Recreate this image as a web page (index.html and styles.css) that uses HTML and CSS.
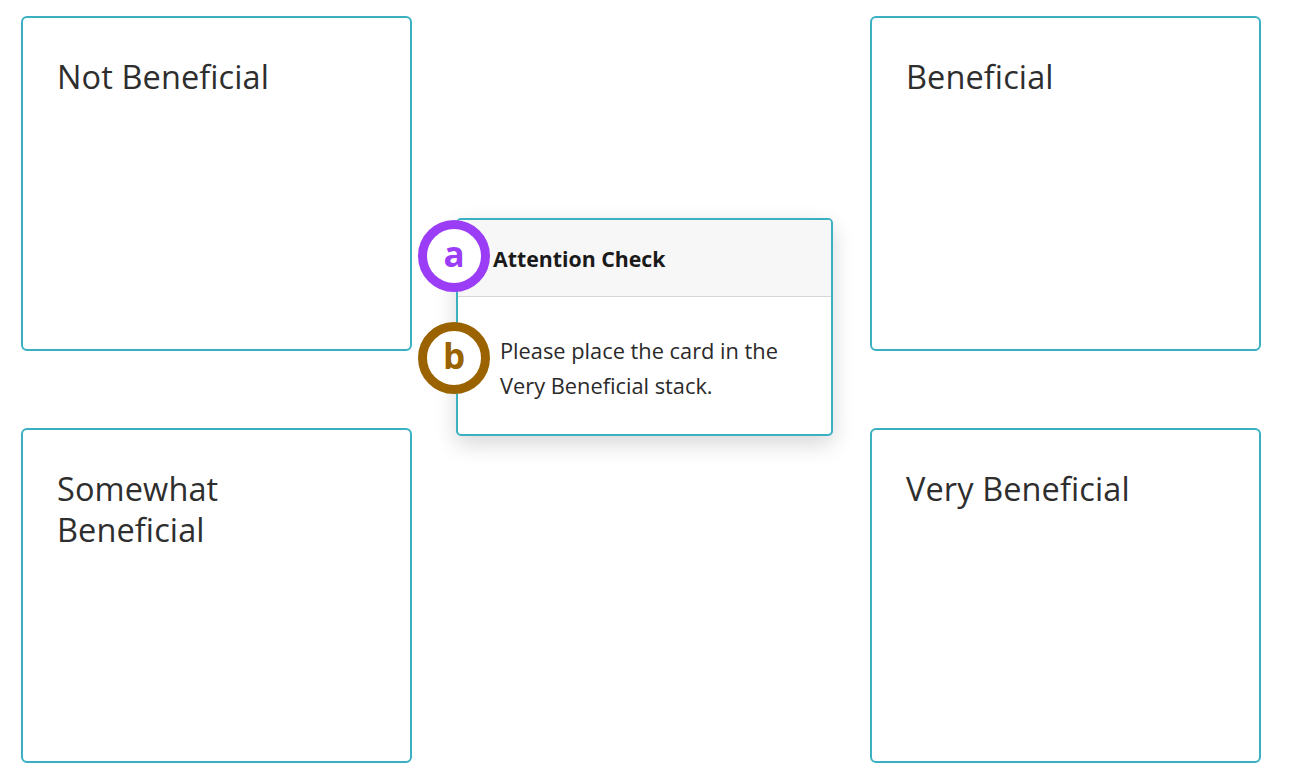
FILE: index.html
```html
<!DOCTYPE html>
<html>
<head>
<meta charset="utf-8">
<link rel="stylesheet" href="styles.css">
</head>
<body>
<div class="board">
  <div class="stack"><div class="stack-title">Not Beneficial</div></div>
  <div class="stack"><div class="stack-title">Beneficial</div></div>
  <div class="stack"><div class="stack-title narrow">Somewhat Beneficial</div></div>
  <div class="stack"><div class="stack-title">Very Beneficial</div></div>

  <div class="card">
    <div class="card-header">Attention Check</div>
    <div class="card-body">Please place the card in the<br>Very Beneficial stack.</div>
  </div>
  <div class="badge badge-a">a</div>
  <div class="badge badge-b">b</div>
</div>
</body>
</html>
```

FILE: styles.css
```css
html, body {
  margin: 0;
  padding: 0;
  background: #ffffff;
}
body {
  font-family: "Open Sans", "Noto Sans", sans-serif;
  color: #2b2b2b;
}
.board {
  position: relative;
  display: grid;
  grid-template-columns: 391px 391px;
  grid-template-rows: 335px 335px;
  column-gap: 458px;
  row-gap: 77px;
  padding: 16px 0 0 21px;
}
.stack {
  box-sizing: border-box;
  border: 2px solid #3bb0c3;
  border-radius: 6px;
  padding: 38px 34px;
}
.stack-title {
  font-size: 32.5px;
  line-height: 41px;
  color: #2e2e2e;
  letter-spacing: 0.1px;
}
.stack-title.narrow {
  max-width: 260px;
}
.card {
  position: absolute;
  left: 456px;
  top: 218px;
  width: 377px;
  box-sizing: border-box;
  border: 2px solid #3bb0c3;
  border-radius: 5px;
  background: #ffffff;
  box-shadow: 0 8px 22px rgba(0,0,0,0.16);
  overflow: hidden;
}
.card-header {
  background: #f7f7f7;
  border-bottom: 1px solid #d6d6d6;
  height: 77px;
  box-sizing: border-box;
  padding: 24px 0 0 35px;
  font-weight: 700;
  font-size: 21.3px;
  color: #1a1a1a;
}
.card-body {
  padding: 36px 10px 31px 42px;
  font-size: 21.8px;
  line-height: 35px;
  color: #2a2a2a;
}
.badge {
  position: absolute;
  width: 72px;
  height: 72px;
  box-sizing: border-box;
  border-radius: 50%;
  background: #ffffff;
  border: 9px solid;
  display: flex;
  align-items: center;
  justify-content: center;
  font-weight: 700;
  font-size: 35px;
  line-height: 1;
  padding-bottom: 5px;
}
.badge-a {
  left: 418px;
  top: 220px;
  border-color: #9b3df6;
  color: #9b3df6;
}
.badge-b {
  left: 418px;
  top: 322px;
  border-color: #9a6300;
  color: #9a6300;
}
```
